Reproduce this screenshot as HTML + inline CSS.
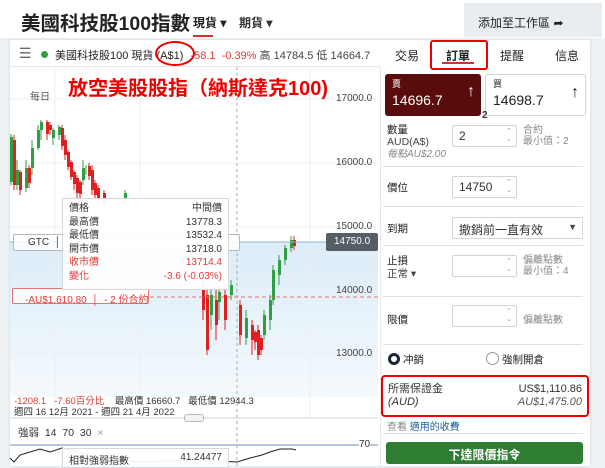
<!DOCTYPE html>
<html><head><meta charset="utf-8"><style>
*{margin:0;padding:0;box-sizing:border-box}
body{width:605px;height:466px;overflow:hidden;background:#eef1f3;font-family:"Liberation Sans","Noto Sans CJK TC",sans-serif;color:#333;position:relative;font-size:11px}
.a{position:absolute;white-space:nowrap}
.red{color:#e53935}
.inp{position:absolute;background:#fff;border:1px solid #cfd4d8;border-radius:2px;font-size:12px;padding:3px 0 0 6px}
.spin{position:absolute;right:4px;top:2px;font-size:7px;color:#999;line-height:8px}
.lbl{position:absolute;font-size:10.5px;color:#222}
.sep{position:absolute;left:383px;width:200px;height:1px;background:#dde1e4}
.g{fill:#2ea043}.r{fill:#e02020}
</style></head><body>
<div class="a" style="left:0;top:0;width:605px;height:38px;background:#fff"></div>
<div class="a" style="left:21px;top:7px;font-size:19.5px;font-weight:bold;color:#222">美國科技股100指數</div>
<div class="a" style="left:193px;top:14px;font-size:12px;font-weight:bold;color:#222">現貨 ▾</div>
<div class="a" style="left:193px;top:35px;width:20px;height:2px;background:#d32f2f"></div>
<div class="a" style="left:239px;top:14px;font-size:12px;font-weight:bold;color:#333">期貨 ▾</div>
<div class="a" style="left:464px;top:3px;width:138px;height:34px;background:#e9edf0;font-size:12px;padding:11px 0 0 14px;color:#222">添加至工作區 ➦</div>
<div class="a" style="left:10px;top:40px;width:580px;height:426px;background:#fff;box-shadow:0 0 2px #ccc"></div>
<div class="a" style="left:10px;top:66px;width:370px;height:1px;background:#e5e8ea"></div>
<div class="a" style="left:19px;top:45px;font-size:14px;color:#666">☰</div>
<div class="a" style="left:41px;top:51px;width:7px;height:7px;border-radius:50%;background:#2ea043"></div>
<div class="a" style="left:55px;top:47px;font-size:11px;color:#222">美國科技股100 現貨 (A$1) <span class="red" style="margin-left:4px">-58.1 &nbsp;-0.39%</span> <span style="color:#444">高 14784.5 低 14664.7</span></div>
<div class="a" style="left:155px;top:41px;width:40px;height:25px;border:2px solid #e00;border-radius:50%"></div>
<div class="a" style="left:395px;top:47px;font-size:12px;color:#222">交易</div>
<div class="a" style="left:446px;top:47px;font-size:12px;color:#222;font-weight:bold">訂單</div>
<div class="a" style="left:442px;top:62px;width:32px;height:2px;background:#d32f2f"></div>
<div class="a" style="left:430px;top:40px;width:58px;height:30px;border:2px solid #e00;border-radius:3px"></div>
<div class="a" style="left:500px;top:47px;font-size:12px;color:#222">提醒</div>
<div class="a" style="left:555px;top:47px;font-size:12px;color:#222">信息</div>
<svg class="a" style="left:0;top:67px" width="380" height="399" viewBox="0 67 380 399">
<defs><linearGradient id="bl" x1="0" y1="0" x2="0" y2="1"><stop offset="0" stop-color="#dcecf8"/><stop offset="1" stop-color="#f4f9fd"/></linearGradient></defs>
<rect x="10" y="242" width="368" height="155" fill="url(#bl)"/>
<g stroke="#eceff1"><line x1="10" x2="378" y1="99" y2="99"/><line x1="10" x2="378" y1="163" y2="163"/><line x1="10" x2="378" y1="227" y2="227"/><line x1="10" x2="378" y1="290" y2="290"/><line x1="10" x2="378" y1="354" y2="354"/>
<line x1="55" x2="55" y1="67" y2="418"/><line x1="140" x2="140" y1="67" y2="418"/><line x1="310" x2="310" y1="67" y2="418"/></g>
<line x1="237" x2="237" y1="67" y2="466" stroke="#aaa" stroke-dasharray="3,3"/>
<g stroke="#2ea043" stroke-width="1">
<path d="M11 134V185M17 160V190M26 160V192M32 140V175M38 125V150M41 120V140M53 128V145M59 125V140M83 160V185M86 165V175M125 190V205M211 285V330M219 285V320M231 280V300M246 310V345M264 310V340M270 295V330M273 265V305M279 255V285M285 245V265M291 236V252"/></g>
<g stroke="#e02020"><path d="M14 135V190M20 170V195M29 165V188M47 120V140M50 122V135M62 125V150M65 135V160M68 150V170M71 160V180M74 170V190M77 175V200M80 180V200M89 163V180M92 165V195M95 180V200M98 185V205M104 190V205M203 280V320M207 285V355M216 290V340M225 285V330M240 300V345M252 320V355M255 330V350M258 325V360M261 335V355M294 236V250"/></g>
<g class="g"><rect x="10" y="137" width="3" height="45"/><rect x="16" y="170" width="3" height="15"/><rect x="25" y="168" width="3" height="20"/><rect x="31" y="148" width="3" height="20"/><rect x="37" y="130" width="3" height="18"/><rect x="40" y="122" width="3" height="8"/><rect x="52" y="130" width="3" height="8"/><rect x="58" y="127" width="3" height="8"/><rect x="82" y="168" width="3" height="12"/><rect x="124" y="193" width="3" height="8"/><rect x="210" y="295" width="3" height="20"/><rect x="218" y="292" width="3" height="10"/><rect x="230" y="285" width="3" height="10"/><rect x="245" y="318" width="3" height="20"/><rect x="263" y="315" width="3" height="20"/><rect x="269" y="300" width="3" height="20"/><rect x="272" y="270" width="3" height="30"/><rect x="278" y="260" width="3" height="15"/><rect x="284" y="248" width="3" height="12"/><rect x="290" y="240" width="3" height="8"/></g>
<g class="r"><rect x="13" y="140" width="3" height="45"/><rect x="19" y="172" width="3" height="18"/><rect x="28" y="168" width="3" height="15"/><rect x="46" y="122" width="3" height="12"/><rect x="49" y="125" width="3" height="5"/><rect x="61" y="128" width="3" height="18"/><rect x="64" y="140" width="3" height="15"/><rect x="67" y="152" width="3" height="15"/><rect x="70" y="162" width="3" height="15"/><rect x="73" y="172" width="3" height="12"/><rect x="76" y="178" width="3" height="15"/><rect x="79" y="182" width="3" height="12"/><rect x="88" y="166" width="3" height="10"/><rect x="91" y="170" width="3" height="20"/><rect x="94" y="183" width="3" height="12"/><rect x="97" y="188" width="3" height="12"/><rect x="103" y="193" width="3" height="8"/><rect x="202" y="290" width="3" height="20"/><rect x="206" y="295" width="3" height="55"/><rect x="215" y="300" width="3" height="25"/><rect x="224" y="295" width="3" height="25"/><rect x="239" y="305" width="3" height="30"/><rect x="251" y="325" width="3" height="15"/><rect x="254" y="332" width="3" height="10"/><rect x="257" y="330" width="3" height="25"/><rect x="260" y="338" width="3" height="12"/><rect x="293" y="240" width="3" height="6"/></g>
<line x1="10" x2="378" y1="242" y2="242" stroke="#8fb3d3"/>
<line x1="150" x2="378" y1="297" y2="297" stroke="#e57373" stroke-dasharray="4,3"/>
<polyline fill="none" stroke="#222" stroke-width="1" points="10,458 14,462 20,455 30,452 40,449 50,452 62,448 100,458 140,462 200,460 237,462 250,458 262,455 270,452 280,449 292,449 296,450"/>
<line x1="10" x2="378" y1="445" y2="445" stroke="#6b8fb5"/>
<line x1="10" x2="378" y1="418" y2="418" stroke="#d0d4d8"/>
</svg>
<div class="a" style="left:68px;top:72px;font-size:20px;font-weight:bold;color:#e00">放空美股股指（納斯達克100)</div>
<div class="a" style="left:30px;top:88px;font-size:10px;color:#555">每日</div>
<div class="a" style="left:336px;top:93px;font-size:10px;color:#444">17000.0</div>
<div class="a" style="left:336px;top:157px;font-size:10px;color:#444">16000.0</div>
<div class="a" style="left:336px;top:221px;font-size:10px;color:#444">15000.0</div>
<div class="a" style="left:336px;top:285px;font-size:10px;color:#444">14000.0</div>
<div class="a" style="left:336px;top:348px;font-size:10px;color:#444">13000.0</div>
<div class="a" style="left:326px;top:233px;width:52px;height:18px;background:#555d66;color:#fff;font-size:10px;padding:3px 0 0 8px;border-radius:2px">14750.0</div>
<div class="a" style="left:13px;top:234px;width:227px;height:17px;border:1px solid #b0b8c0;background:rgba(255,255,255,.85);font-size:10px;padding:2px 0 0 14px;border-radius:2px">GTC &nbsp;│</div>
<div class="a" style="left:12px;top:288px;width:137px;height:16px;border:1px solid #e57373;background:rgba(255,255,255,.9);color:#e53935;font-size:10px;padding:2px 0 0 12px;border-radius:2px">-AU$1,610.80 &nbsp;│ &nbsp;- 2 份合約</div>
<div class="a" style="left:62px;top:198px;width:167px;height:92px;background:rgba(255,255,255,.93);border:1px solid #d5d9dc;font-size:10px;line-height:13.6px;padding:3px 6px;color:#333">
<div>價格<span style="float:right">中間價</span></div><div>最高價<span style="float:right">13778.3</span></div><div>最低價<span style="float:right">13532.4</span></div><div>開市價<span style="float:right">13718.0</span></div><div class="red">收市價<span style="float:right">13714.4</span></div><div class="red">變化<span style="float:right">-3.6 (-0.03%)</span></div></div>
<div class="a" style="left:14px;top:393px;font-size:9.5px"><span class="red">-1208.1 &nbsp;&nbsp;-7.60百分比</span> &nbsp;&nbsp;&nbsp;最高價 16660.7 &nbsp;&nbsp;最低價 12944.3</div>
<div class="a" style="left:14px;top:404px;font-size:9.5px">週四 16 12月 2021 - 週四 21 4月 2022</div>
<div class="a" style="left:184px;top:414px;width:20px;height:8px;border:1px solid #bbb;border-radius:3px;background:#f3f3f3"></div>
<div class="a" style="left:18px;top:425px;font-size:10.5px;color:#333">強弱 &nbsp;14 &nbsp;70 &nbsp;30 &nbsp;<span style="color:#999">×</span></div>
<div class="a" style="left:359px;top:439px;font-size:10px;background:#fff">70</div>
<div class="a" style="left:62px;top:448px;width:167px;height:20px;background:rgba(255,255,255,.93);border:1px solid #d5d9dc;font-size:10px;padding:3px 6px">相對強弱指數<span style="float:right">41.24477</span></div>
<div class="a" style="left:380px;top:67px;width:1px;height:399px;background:#e5e8ea"></div>
<div class="a" style="left:385px;top:74px;width:96px;height:42px;background:#5a0c0c;border-radius:3px;color:#fff;padding:3px 7px"><div style="font-size:9px">賣</div><div style="font-size:14px;margin-top:2px">14696.7</div><div class="a" style="right:6px;top:9px;font-size:16px">↑</div></div>
<div class="a" style="left:485px;top:74px;width:101px;height:42px;background:#fff;border:1px solid #cfd4d8;border-radius:3px;color:#222;padding:2px 7px"><div style="font-size:9px">買</div><div style="font-size:14px;margin-top:2px">14698.7</div><div class="a" style="right:6px;top:9px;font-size:16px">↑</div></div>
<div class="a" style="left:482px;top:110px;font-size:10px;font-weight:bold">2</div>
<div class="lbl" style="left:387px;top:124px;line-height:12px">數量<br><span style="color:#444">AUD(A$)</span><br><i style="color:#888;font-size:10px">每點AU$2.00</i></div>
<div class="inp" style="left:452px;top:125px;width:65px;height:22px">2<span class="spin">⌃<br>⌄</span></div>
<div class="a" style="left:523px;top:125px;font-size:10px;color:#888;line-height:11px">合約<br>最小值：2</div>
<div class="sep" style="top:166px"></div>
<div class="lbl" style="left:387px;top:180px">價位</div>
<div class="inp" style="left:452px;top:176px;width:65px;height:22px">14750<span class="spin">⌃<br>⌄</span></div>
<div class="sep" style="top:206px"></div>
<div class="lbl" style="left:387px;top:221px">到期</div>
<div class="inp" style="left:452px;top:217px;width:131px;height:22px">撤銷前一直有效<span class="a" style="right:5px;top:4px;font-size:9px;color:#444">▼</span></div>
<div class="sep" style="top:245px"></div>
<div class="lbl" style="left:387px;top:255px;line-height:13px">止損<br><span style="color:#444">正常 ▾</span></div>
<div class="inp" style="left:452px;top:255px;width:65px;height:22px"><span class="spin">⌃<br>⌄</span></div>
<div class="a" style="left:523px;top:255px;font-size:10px;color:#888;line-height:11px">偏離點數<br>最小值：4</div>
<div class="sep" style="top:296px"></div>
<div class="lbl" style="left:387px;top:312px">限價</div>
<div class="inp" style="left:452px;top:305px;width:65px;height:22px"><span class="spin">⌃<br>⌄</span></div>
<div class="a" style="left:523px;top:311px;font-size:10px;color:#888">偏離點數</div>
<div class="sep" style="top:344px"></div>
<div class="a" style="left:388px;top:353px;width:12px;height:12px;border:3px solid #1a2433;border-radius:50%"></div>
<div class="lbl" style="left:403px;top:352px">冲銷</div>
<div class="a" style="left:486px;top:352px;width:13px;height:13px;border:1px solid #999;border-radius:50%"></div>
<div class="lbl" style="left:502px;top:352px">強制開倉</div>
<div class="a" style="left:381px;top:375px;width:208px;height:42px;border:2px solid #e00;border-radius:4px;background:#fff;padding:6px 5px;font-size:11px;line-height:13px">所需保證金<br><i>(AUD)</i><div class="a" style="right:5px;top:6px;text-align:right">US$1,110.86<br><i style="color:#555">AU$1,475.00</i></div></div>
<div class="a" style="left:387px;top:418px;font-size:10px;color:#888">查看 <span style="color:#1e5a9c">適用的收費</span></div>
<div class="sep" style="top:433px"></div>
<div class="a" style="left:386px;top:442px;width:197px;height:22px;background:#2e7d32;border-radius:3px;color:#fff;font-weight:bold;font-size:12px;text-align:center;padding-top:4px">下達限價指令</div>
</body></html>
